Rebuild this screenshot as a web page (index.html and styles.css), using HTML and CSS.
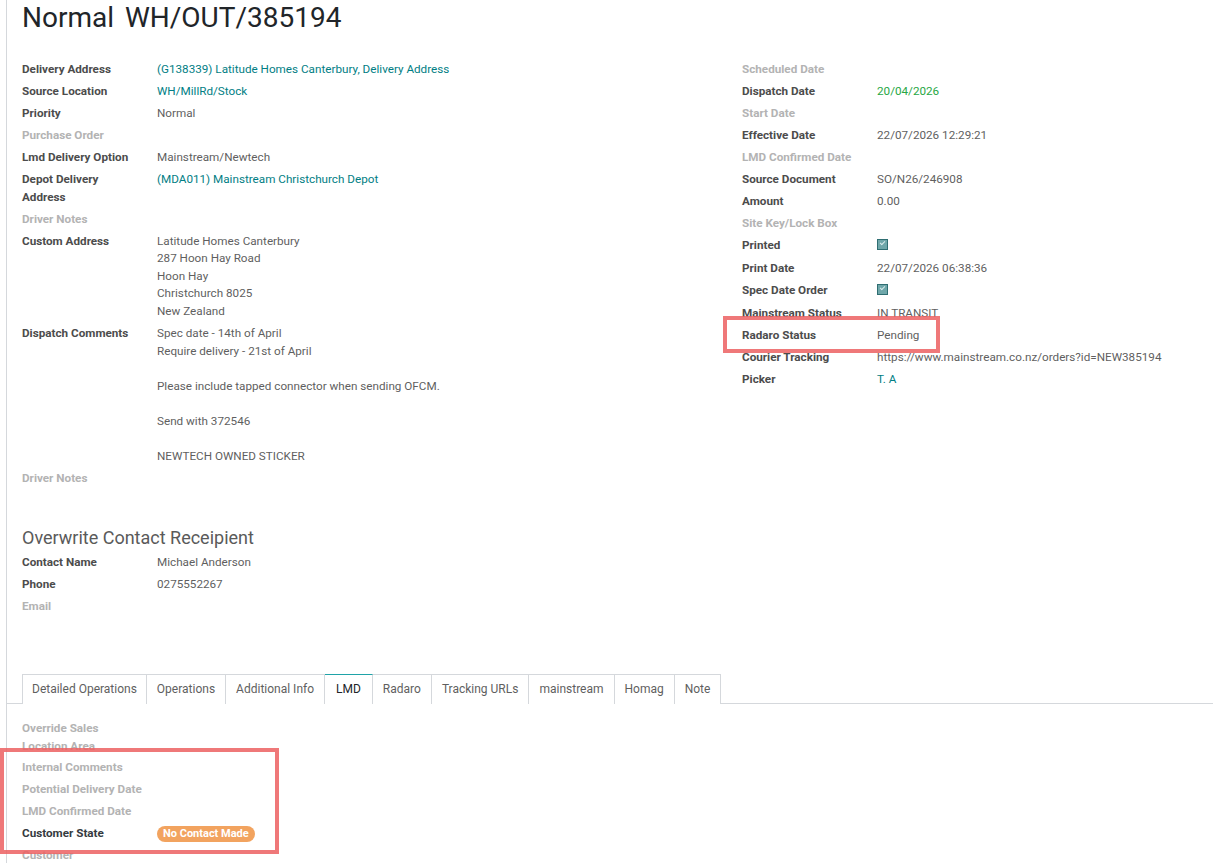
FILE: index.html
```html
<!DOCTYPE html>
<html>
<head>
<meta charset="utf-8">
<title>WH/OUT/385194</title>
<link rel="stylesheet" href="styles.css">
</head>
<body>
<div class="sheet">
<h1 class="title"><span>Normal</span> <span>WH/OUT/385194</span></h1>

<div class="groups">
<table class="fields">
<tr><th>Delivery Address</th><td><a href="#">(G138339) Latitude Homes Canterbury, Delivery Address</a></td></tr>
<tr><th>Source Location</th><td><a href="#">WH/MillRd/Stock</a></td></tr>
<tr><th>Priority</th><td>Normal</td></tr>
<tr><th class="empty">Purchase Order</th><td></td></tr>
<tr><th>Lmd Delivery Option</th><td>Mainstream/Newtech</td></tr>
<tr><th>Depot Delivery Address</th><td><a href="#">(MDA011) Mainstream Christchurch Depot</a></td></tr>
<tr><th class="empty">Driver Notes</th><td></td></tr>
<tr><th>Custom Address</th><td class="multi">Latitude Homes Canterbury
287 Hoon Hay Road
Hoon Hay
Christchurch 8025
New Zealand</td></tr>
<tr><th>Dispatch Comments</th><td class="multi">Spec date - 14th of April
Require delivery - 21st of April

Please include tapped connector when sending OFCM.

Send with 372546

NEWTECH OWNED STICKER</td></tr>
<tr><th class="empty">Driver Notes</th><td></td></tr>
</table>

<table class="fields">
<tr><th class="empty">Scheduled Date</th><td></td></tr>
<tr><th>Dispatch Date</th><td class="ok">20/04/2026</td></tr>
<tr><th class="empty">Start Date</th><td></td></tr>
<tr><th>Effective Date</th><td>22/07/2026 12:29:21</td></tr>
<tr><th class="empty">LMD Confirmed Date</th><td></td></tr>
<tr><th>Source Document</th><td>SO/N26/246908</td></tr>
<tr><th>Amount</th><td>0.00</td></tr>
<tr><th class="empty">Site Key/Lock Box</th><td></td></tr>
<tr class="boxrow"><th>Printed</th><td><span class="check"></span></td></tr>
<tr><th>Print Date</th><td>22/07/2026 06:38:36</td></tr>
<tr class="boxrow"><th>Spec Date Order</th><td><span class="check"></span></td></tr>
<tr><th>Mainstream Status</th><td>IN TRANSIT</td></tr>
<tr><th>Radaro Status</th><td>Pending</td></tr>
<tr><th>Courier Tracking</th><td>https://www.mainstream.co.nz/orders?id=NEW385194</td></tr>
<tr><th>Picker</th><td><a href="#">T. A</a></td></tr>
</table>
</div>

<h2 class="separator">Overwrite Contact Receipient</h2>
<table class="fields">
<tr><th>Contact Name</th><td>Michael Anderson</td></tr>
<tr><th>Phone</th><td>0275552267</td></tr>
<tr><th class="empty">Email</th><td></td></tr>
</table>

<ul class="tabs">
<li>Detailed Operations</li>
<li>Operations</li>
<li>Additional Info</li>
<li class="active">LMD</li>
<li>Radaro</li>
<li>Tracking URLs</li>
<li>mainstream</li>
<li>Homag</li>
<li>Note</li>
</ul>

<table class="fields">
<tr><th class="empty">Override Sales Location Area</th><td></td></tr>
<tr><th class="empty">Internal Comments</th><td></td></tr>
<tr><th class="empty">Potential Delivery Date</th><td></td></tr>
<tr><th class="empty">LMD Confirmed Date</th><td></td></tr>
<tr><th class="strong">Customer State</th><td><span class="badge">No Contact Made</span></td></tr>
<tr><th class="empty">Customer</th><td></td></tr>
</table>
</div>

<div class="mark mark-radaro"></div>
<div class="mark mark-lmd"></div>
</body>
</html>
```

FILE: styles.css
```css
html, body {margin:0; background:#fff;}
body {font-family:Roboto, "Liberation Sans", sans-serif; font-size:11.7px; color:#5f5f5f; overflow:hidden; height:863px; position:relative;}
a {color:#017e84; text-decoration:none;}

.sheet {margin-left:6px; border-left:1px solid #d5d8dc; padding-left:15px; min-height:863px;}
.title {margin:0; padding-top:2px; font-size:28px; font-weight:400; line-height:32px; color:#212529;}
.title span + span {margin-left:4px;}

.groups {display:grid; grid-template-columns:720px 1fr; align-items:start; margin-top:25px;}
.fields {border-collapse:collapse;}
.fields th, .fields td {padding:2.2px 0; line-height:17.6px; vertical-align:top; text-align:left;}
.fields th {width:121px; max-width:121px; padding-right:14px; font-weight:700; color:#4c4c4c;}
.fields th.empty {color:#b3b3b3;}
.fields th.strong {color:#353a40;}
.fields td.multi {white-space:pre-line;}
.fields td.ok {color:#28a745;}
.boxrow td {padding-top:4px; padding-bottom:1.6px;}

.check {display:inline-block; width:9px; height:9px; border:1px solid #2f6e72; background:#6fa7aa; position:relative; vertical-align:top;}
.check:after {content:""; position:absolute; left:2px; top:1px; width:4px; height:2px; border-left:1px solid #d9ecec; border-bottom:1px solid #d9ecec; transform:rotate(-45deg);}

.separator {margin:36px 0 2px; font-size:18px; font-weight:400; line-height:24px; color:#5a5a5a;}

.tabs {list-style:none; display:flex; margin:56px 0 14px -15px; padding:0 0 0 15px; border-bottom:1px solid #d5d8dc; font-size:12px;}
.tabs li {padding:0 10px; line-height:28px; border:1px solid #d5d8dc; border-left:none; border-bottom:none; margin-bottom:-1px; color:#5f5f5f; background:#fff;}
.tabs li:first-child {border-left:1px solid #d5d8dc; padding:0 9px;}
.tabs li.active {border-top-color:#1fa3a8; color:#212529; height:29px; padding:0 11px;}

.badge {display:inline-block; background:#f2a35f; color:#fff; font-weight:700; font-size:11px; line-height:16px; padding:0 6px; border-radius:8px; margin-top:1px;}

.mark {position:absolute; border:4px solid rgba(236,96,98,0.85);}
.mark-radaro {left:723px; top:316px; width:209px; height:29px;}
.mark-lmd {left:0; top:748px; width:271px; height:98px;}
```
